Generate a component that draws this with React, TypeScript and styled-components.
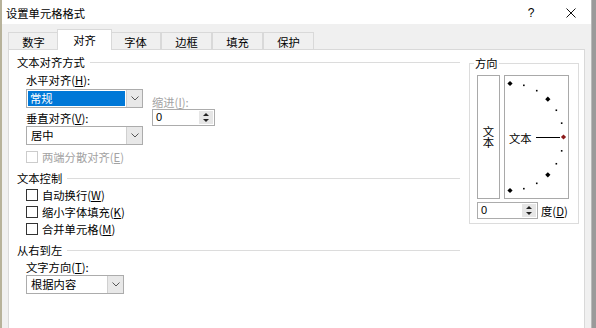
import React from "react";
import styled, { createGlobalStyle } from "styled-components";

const FONT = `"Noto Sans CJK SC", "Noto Sans", sans-serif`;

const GlobalStyle = createGlobalStyle`
  html, body { margin: 0; padding: 0; }
  body {
    width: 596px; height: 328px; overflow: hidden;
    background: #a6a6a6;
    font-family: ${FONT};
    font-size: 11.3px;
    color: #000;
  }
  * { box-sizing: border-box; }
`;

const Page = styled.div`
  display: flex;
  height: 328px;
`;

const SideStrip = styled.div<{ $w: number; $c: string }>`
  flex: none;
  width: ${(p) => p.$w}px;
  background: ${(p) => p.$c};
`;

const Dialog = styled.div`
  flex: none;
  width: 590px;
  background: #f0f0f0;
  border-right: 1px solid #b9b9b9;
  display: flex;
  flex-direction: column;
`;

const TitleBar = styled.div`
  height: 24px;
  background: #fff;
  display: flex;
  align-items: center;
  padding-left: 4px;
`;

const TitleText = styled.div`
  flex: 1;
  line-height: 14px;
  margin-top: 1px;
`;

const TitleButton = styled.div`
  width: 40px;
  height: 24px;
  display: flex;
  align-items: center;
  justify-content: center;
  font-family: "Liberation Sans", sans-serif;
  font-size: 12px;
  margin-top: 1px;
`;

const TabStrip = styled.div`
  height: 25px;
  display: flex;
  align-items: flex-end;
  padding-left: 6px;
`;

const Tab = styled.div<{ $active?: boolean }>`
  position: relative;
  width: ${(p) => (p.$active ? 55 : 51)}px;
  height: ${(p) => (p.$active ? 21 : 17)}px;
  margin: ${(p) => (p.$active ? "0 -2px -1px -2px" : "0")};
  z-index: ${(p) => (p.$active ? 2 : 1)};
  background: ${(p) => (p.$active ? "#fff" : "#f0f0f0")};
  border: 1px solid #d9d9d9;
  border-bottom: none;
  text-align: center;
  line-height: 14px;
  padding-top: ${(p) => (p.$active ? 3 : 2)}px;
  & + & { border-left-color: ${(p) => (p.$active ? "#d9d9d9" : "#d9d9d9")}; }
`;

const Panel = styled.div`
  flex: 1;
  margin-left: 6px;
  width: 577px;
  background: #fff;
  border: 1px solid #d9d9d9;
  border-bottom: none;
  display: flex;
  padding-left: 8px;
`;

const LeftCol = styled.div`
  width: 443px;
  display: flex;
  flex-direction: column;
`;

const RightCol = styled.div`
  margin-left: 9px;
  margin-top: 6px;
`;

const GroupHeader = styled.div<{ $mt: number }>`
  display: flex;
  align-items: center;
  height: 14px;
  line-height: 14px;
  margin-top: ${(p) => p.$mt}px;
  &::after {
    content: "";
    flex: 1;
    height: 1px;
    margin-left: 5px;
    background: #dcdcdc;
  }
`;

const Indent = styled.div<{ $mt: number }>`
  margin-left: 9px;
  margin-top: ${(p) => p.$mt}px;
  display: flex;
  flex-direction: column;
  align-items: flex-start;
`;

const AlignRow = styled.div`
  display: flex;
  margin-left: 9px;
  margin-top: 4px;
`;

const SubCol = styled.div<{ $mt?: number; $ml?: number }>`
  display: flex;
  flex-direction: column;
  align-items: flex-start;
  margin-top: ${(p) => p.$mt ?? 0}px;
  margin-left: ${(p) => p.$ml ?? 0}px;
`;

const Label = styled.div<{ $mt?: number; $disabled?: boolean }>`
  line-height: 14px;
  height: 14px;
  white-space: nowrap;
  margin-top: ${(p) => p.$mt ?? 0}px;
  color: ${(p) => (p.$disabled ? "#a3a3a3" : "#000")};
  u { text-underline-offset: 1px; }
`;

const SelectBox = styled.div<{ $w: number; $mt?: number }>`
  width: ${(p) => p.$w}px;
  height: 19px;
  margin-top: ${(p) => p.$mt ?? 0}px;
  border: 1px solid #acacac;
  background: #fff;
  display: flex;
`;

const SelectValue = styled.div<{ $selected?: boolean }>`
  flex: 1;
  margin: 1px;
  padding-left: ${(p) => (p.$selected ? 2 : 3)}px;
  line-height: 15px;
  background: ${(p) => (p.$selected ? "#0078d7" : "transparent")};
  color: ${(p) => (p.$selected ? "#fff" : "#000")};
`;

const DropButton = styled.div`
  width: 16px;
  background: #e8e8e8;
  border-left: 1px solid #d0d0d0;
  display: flex;
  align-items: center;
  justify-content: center;
`;

const SpinBox = styled.div<{ $w: number; $mt?: number }>`
  width: ${(p) => p.$w}px;
  height: 17px;
  margin-top: ${(p) => p.$mt ?? 0}px;
  border: 1px solid #acacac;
  background: #fff;
  display: flex;
`;

const SpinValue = styled.div`
  flex: 1;
  padding-left: 3px;
  line-height: 15px;
  font-family: "Liberation Sans", sans-serif;
  font-size: 11px;
`;

const SpinButtons = styled.div`
  width: 14px;
  margin: 1px;
  background: #e6e6e6;
  display: flex;
  flex-direction: column;
  align-items: center;
  justify-content: space-evenly;
`;

const Tri = styled.div<{ $up?: boolean }>`
  width: 0;
  height: 0;
  border-left: 3px solid transparent;
  border-right: 3px solid transparent;
  ${(p) => (p.$up ? "border-bottom: 3px solid #222;" : "border-top: 3px solid #222;")}
`;

const CheckRow = styled.div<{ $mt?: number; $disabled?: boolean }>`
  display: flex;
  align-items: center;
  height: 17px;
  margin-top: ${(p) => p.$mt ?? 0}px;
  color: ${(p) => (p.$disabled ? "#a3a3a3" : "#000")};
  u { text-underline-offset: 1px; }
`;

const Check = styled.span<{ $disabled?: boolean }>`
  width: 12px;
  height: 12px;
  border: 1px solid ${(p) => (p.$disabled ? "#cccccc" : "#333")};
  background: #fff;
  margin-right: 4px;
  flex: none;
`;

const Fieldset = styled.fieldset`
  width: 110px;
  margin: 0;
  border: 1px solid #dcdcdc;
  padding: 5px 7px 4px 7px;
  min-width: 0;
`;

const Legend = styled.legend`
  padding: 0 1px;
  margin-left: -3px;
  line-height: 14px;
  height: 14px;
`;

const OrientRow = styled.div`
  display: flex;
  gap: 4px;
`;

const VerticalBox = styled.div`
  width: 23px;
  height: 124px;
  border: 1px solid #a9a9a9;
  display: flex;
  align-items: center;
  justify-content: center;
`;

const VerticalText = styled.span`
  writing-mode: vertical-lr;
  line-height: 12px;
  margin-top: 1px;
`;

const DialBox = styled.div`
  position: relative;
  width: 65px;
  height: 124px;
  border: 1px solid #a9a9a9;
  display: flex;
  align-items: center;
  padding-left: 4px;
`;

const DialText = styled.span`
  line-height: 14px;
  margin-top: 2px;
`;

const DialSvg = styled.svg`
  position: absolute;
  left: 0;
  top: 0;
`;

const DegreeRow = styled.div`
  display: flex;
  align-items: center;
  margin-top: 3px;
  gap: 3px;
  u { text-underline-offset: 1px; }
`;

const Chevron = () => (
  <svg width="8" height="5" viewBox="0 0 8 5">
    <polyline points="0.5,0.5 4,4 7.5,0.5" fill="none" stroke="#555" strokeWidth="1" />
  </svg>
);

const Select = ({ w, mt, value, selected }: { w: number; mt?: number; value: string; selected?: boolean }) => (
  <SelectBox $w={w} $mt={mt}>
    <SelectValue $selected={selected}>{value}</SelectValue>
    <DropButton>
      <Chevron />
    </DropButton>
  </SelectBox>
);

const Spin = ({ w, mt }: { w: number; mt?: number }) => (
  <SpinBox $w={w} $mt={mt}>
    <SpinValue>0</SpinValue>
    <SpinButtons>
      <Tri $up />
      <Tri />
    </SpinButtons>
  </SpinBox>
);

const Dial = () => {
  const cx = 5;
  const cy = 61;
  const r = 53.5;
  const items: React.ReactNode[] = [];
  for (let a = -90; a <= 90; a += 15) {
    const rad = (a * Math.PI) / 180;
    const x = cx + r * Math.cos(rad);
    const y = cy - r * Math.sin(rad);
    const big = a % 45 === 0;
    if (a === 0) continue;
    if (big) {
      items.push(
        <polygon
          key={a}
          points={`${x},${y - 2.6} ${x + 2.6},${y} ${x},${y + 2.6} ${x - 2.6},${y}`}
          fill="#000"
        />
      );
    } else {
      items.push(<rect key={a} x={x - 0.8} y={y - 0.8} width={1.6} height={1.6} fill="#000" />);
    }
  }
  return (
    <DialSvg width="63" height="122" viewBox="0 0 63 122">
      {items}
      <line x1="31" y1={cy + 0.5} x2="55" y2={cy + 0.5} stroke="#000" strokeWidth="1" />
      <polygon
        points={`${cx + r},${cy - 2.6} ${cx + r + 2.6},${cy} ${cx + r},${cy + 2.6} ${cx + r - 2.6},${cy}`}
        fill="#8b1a1a"
      />
    </DialSvg>
  );
};

const tabs = ["数字", "对齐", "字体", "边框", "填充", "保护"];

export default function App() {
  return (
    <>
      <GlobalStyle />
      <Page>
        <SideStrip $w={2} $c="#b7b29a" />
        <Dialog>
          <TitleBar>
            <TitleText>设置单元格格式</TitleText>
            <TitleButton>?</TitleButton>
            <TitleButton>
              <svg width="10" height="10" viewBox="0 0 10 10">
                <line x1="0.5" y1="0.5" x2="9.5" y2="9.5" stroke="#111" strokeWidth="1" />
                <line x1="9.5" y1="0.5" x2="0.5" y2="9.5" stroke="#111" strokeWidth="1" />
              </svg>
            </TitleButton>
          </TitleBar>
          <TabStrip>
            {tabs.map((t) => (
              <Tab key={t} $active={t === "对齐"}>
                {t}
              </Tab>
            ))}
          </TabStrip>
          <Panel>
            <LeftCol>
              <GroupHeader $mt={5}>文本对齐方式</GroupHeader>
              <AlignRow>
                <SubCol>
                  <Label>
                    水平对齐(<u>H</u>):
                  </Label>
                  <Select w={117} mt={2} value="常规" selected />
                  <Label $mt={3}>
                    垂直对齐(<u>V</u>):
                  </Label>
                  <Select w={117} mt={1} value="居中" />
                </SubCol>
                <SubCol $mt={22} $ml={9}>
                  <Label $disabled>
                    缩进(<u>I</u>):
                  </Label>
                  <Spin w={63} mt={0} />
                </SubCol>
              </AlignRow>
              <Indent $mt={3}>
                <CheckRow $disabled>
                  <Check $disabled />
                  两端分散对齐(<u>E</u>)
                </CheckRow>
              </Indent>
              <GroupHeader $mt={6}>文本控制</GroupHeader>
              <Indent $mt={1}>
                <CheckRow>
                  <Check />
                  自动换行(<u>W</u>)
                </CheckRow>
                <CheckRow>
                  <Check />
                  缩小字体填充(<u>K</u>)
                </CheckRow>
                <CheckRow>
                  <Check />
                  合并单元格(<u>M</u>)
                </CheckRow>
              </Indent>
              <GroupHeader $mt={6}>从右到左</GroupHeader>
              <Indent $mt={3}>
                <Label>
                  文字方向(<u>T</u>):
                </Label>
                <Select w={98} mt={1} value="根据内容" />
              </Indent>
            </LeftCol>
            <RightCol>
              <Fieldset>
                <Legend>方向</Legend>
                <OrientRow>
                  <VerticalBox>
                    <VerticalText>文本</VerticalText>
                  </VerticalBox>
                  <DialBox>
                    <DialText>文本</DialText>
                    <Dial />
                  </DialBox>
                </OrientRow>
                <DegreeRow>
                  <Spin w={61} />
                  <span>
                    度(<u>D</u>)
                  </span>
                </DegreeRow>
              </Fieldset>
            </RightCol>
          </Panel>
        </Dialog>
        <SideStrip $w={4} $c="#9a9a9a" />
      </Page>
    </>
  );
}
